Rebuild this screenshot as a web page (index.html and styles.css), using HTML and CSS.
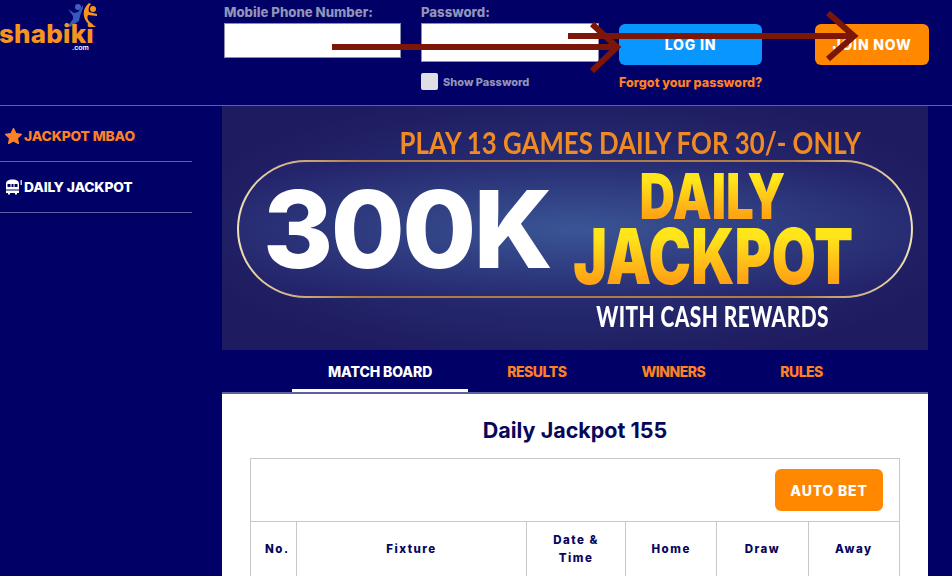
FILE: index.html
```html
<!DOCTYPE html>
<html lang="en">
<head>
    <meta charset="UTF-8">
    <meta name="viewport" content="width=device-width, initial-scale=1.0">
    <title>Shabiki - Daily Jackpot</title>
    <link rel="stylesheet" href="styles.css">
</head>
<body>
    <header class="header">
        <a class="logo" href="#">
            <svg class="logo-figures" width="34" height="26" viewBox="0 0 34 26">
                <circle cx="13" cy="5" r="3" fill="#3f5fc4"/>
                <path d="M3 7 L9 11 L13 10 L16 6 L18 3 L18 6 L15 14 L14 19 L5 25 L3 24 L8 17 L8 14 Z" fill="#3558bd"/>
                <circle cx="28" cy="7" r="3" fill="#f7941d"/>
                <path d="M24 1 C17 7 16 17 27 25 L31 25 C24 20 21 17 23 13 L32 14 L32 12 L24 10 C23 7 24 4 26 2 Z" fill="#f7941d"/>
            </svg>
            <span class="logo-name">shabiki</span>
            <span class="logo-com">.com</span>
        </a>

        <form class="login-form">
            <div class="field field-phone">
                <label>Mobile Phone Number:</label>
                <input type="text" class="text-input">
            </div>
            <div class="field field-password">
                <label>Password:</label>
                <input type="text" class="text-input tall">
                <div class="show-password">
                    <span class="checkbox"></span>
                    <span>Show Password</span>
                </div>
            </div>
            <div class="login-actions">
                <button type="button" class="btn btn-blue">LOG IN</button>
                <a class="forgot" href="#">Forgot your password?</a>
            </div>
            <button type="button" class="btn btn-orange join">JOIN NOW</button>
        </form>
    </header>

    <div class="page">
        <nav class="sidebar">
            <a class="side-link orange" href="#">
                <svg width="17" height="16" viewBox="0 0 24 23"><path d="M12 0.5 L15.6 7.8 L23.6 9 L17.8 14.6 L19.2 22.6 L12 18.8 L4.8 22.6 L6.2 14.6 L0.4 9 L8.4 7.8 Z" fill="#ff8124" stroke="#ff8124" stroke-width="1.5" stroke-linejoin="round"/></svg>
                JACKPOT MBAO
            </a>
            <a class="side-link" href="#">
                <svg width="17" height="16" viewBox="0 0 17 16"><path d="M1 5 C1 2 3 0.5 7.5 0.5 C12 0.5 14 2 14 5 L14 14 L12 14 L12 15.5 L10 15.5 L10 14 L5 14 L5 15.5 L3 15.5 L3 14 L1 14 Z" fill="#fff"/><rect x="2.5" y="5" width="10" height="3" fill="#000066"/><rect x="5.5" y="5" width="1" height="3" fill="#fff"/><rect x="8.5" y="5" width="1" height="3" fill="#fff"/><rect x="1" y="10.5" width="13" height="1" fill="#000066"/><rect x="15.6" y="1" width="1.2" height="5" fill="#fff"/></svg>
                DAILY JACKPOT
            </a>
        </nav>

        <main class="content">
            <section class="banner">
                <p class="banner-top"><span>PLAY 13 GAMES DAILY FOR 30/- ONLY</span></p>
                <div class="pill">
                    <span class="amount">300K</span>
                    <div class="pill-title">
                        <span class="daily">DAILY</span>
                        <span class="jackpot">JACKPOT</span>
                    </div>
                </div>
                <p class="banner-bottom"><span>WITH CASH REWARDS</span></p>
            </section>

            <div class="tabs">
                <a class="tab active" href="#">MATCH BOARD</a>
                <a class="tab" href="#">RESULTS</a>
                <a class="tab" href="#">WINNERS</a>
                <a class="tab" href="#">RULES</a>
            </div>

            <section class="board">
                <h2>Daily Jackpot 155</h2>
                <table class="match-table">
                    <colgroup>
                        <col class="col-no">
                        <col class="col-fixture">
                        <col class="col-date">
                        <col class="col-odd">
                        <col class="col-odd">
                        <col class="col-odd">
                    </colgroup>
                    <tr>
                        <td colspan="6" class="auto-cell"><button type="button" class="btn btn-orange auto">AUTO BET</button></td>
                    </tr>
                    <tr>
                        <th>No.</th>
                        <th>Fixture</th>
                        <th>Date &amp; Time</th>
                        <th>Home</th>
                        <th>Draw</th>
                        <th>Away</th>
                    </tr>
                </table>
            </section>
        </main>
    </div>

    <!-- arrows drawn over the page -->
    <svg class="arrows" width="952" height="105" viewBox="0 0 952 105">
        <g fill="none" stroke="#7b1608" stroke-width="6">
            <path d="M332 47 H615"/>
            <path d="M592 24 L617 47 L592 71"/>
            <path d="M568 36 H852"/>
            <path d="M828 13 L854 36 L828 59"/>
        </g>
    </svg>
</body>
</html>
```

FILE: styles.css
```css
* {
    margin: 0;
    padding: 0;
    box-sizing: border-box;
    font-family: 'Inter', 'Open Sans', sans-serif;
}

html, body {
    height: 576px;
    overflow: hidden;
}

body {
    position: relative;
    background: #000066;
    color: #fff;
}

a {
    text-decoration: none;
}

.header {
    display: flex;
    height: 106px;
    border-bottom: 1px solid #5d61a3;
}

.logo {
    position: relative;
    width: 224px;
    height: 60px;
    flex-shrink: 0;
}

.logo-figures {
    position: absolute;
    left: 65px;
    top: 2px;
}

.logo-name {
    position: absolute;
    left: -1px;
    top: 24px;
    font-size: 26px;
    line-height: 20px;
    font-weight: 800;
    letter-spacing: 0.2px;
    color: #f7941d;
}

.logo-com {
    position: absolute;
    left: 72px;
    top: 44px;
    font-size: 7px;
    line-height: 7px;
    font-weight: 600;
    color: #fff;
}

.login-form {
    display: flex;
    align-items: flex-start;
    padding-top: 4px;
}

.field label {
    display: block;
    height: 19px;
    font-size: 13.2px;
    line-height: 16px;
    font-weight: 800;
    color: #9094b6;
}

.field-phone {
    width: 177px;
    margin-right: 20px;
}

.field-password {
    width: 178px;
    margin-right: 20px;
}

.text-input {
    display: block;
    width: 100%;
    height: 35px;
    background: #fff;
    border: 1px solid #8a8db0;
}

.text-input.tall {
    height: 39px;
}

.show-password {
    display: flex;
    align-items: center;
    gap: 5px;
    margin-top: 11px;
    font-size: 11px;
    font-weight: 800;
    color: #9094b6;
}

.checkbox {
    width: 17px;
    height: 17px;
    background: #dfdfe3;
    border-radius: 2px;
}

.btn {
    border: none;
    border-radius: 6px;
    color: #fff;
    font-size: 14px;
    font-weight: 800;
    letter-spacing: 0.8px;
}

.login-actions {
    display: flex;
    flex-direction: column;
    width: 143px;
    margin-top: 20px;
    margin-right: 53px;
}

.btn-blue {
    height: 41px;
    background: #0a96ff;
}

.btn-orange {
    background: #ff8800;
}

.forgot {
    margin-top: 10px;
    font-size: 12.6px;
    line-height: 16px;
    font-weight: 800;
    white-space: nowrap;
    color: #ff8124;
}

.join {
    width: 114px;
    height: 41px;
    margin-top: 20px;
}

.page {
    display: grid;
    grid-template-columns: 222px 706px;
}

.sidebar {
    width: 192px;
    padding-top: 5px;
}

.side-link {
    display: flex;
    align-items: center;
    gap: 2px;
    height: 51px;
    padding-left: 5px;
    border-bottom: 1px solid #5d61a3;
    font-size: 13.8px;
    font-weight: 800;
    letter-spacing: -0.15px;
    color: #fff;
}

.side-link.orange {
    color: #ff8124;
}

.banner {
    height: 244px;
    padding: 19px 15px 0;
    overflow: hidden;
    background: radial-gradient(ellipse at 50% 50%, #2c3a80 0%, #1f1b60 80%);
}

.banner-top,
.banner-bottom {
    text-align: center;
    white-space: nowrap;
}

.banner-top span,
.banner-bottom span {
    display: inline-block;
    font-family: 'Lato', sans-serif;
}

.banner-top {
    height: 35px;
    padding-left: 110px;
    line-height: 35px;
    color: #f08a24;
}

.banner-top span {
    font-size: 30px;
    font-weight: 700;
    transform: scaleX(0.86);
}

.pill {
    display: flex;
    align-items: center;
    width: 676px;
    height: 138px;
    border: 2px solid transparent;
    border-radius: 69px;
    background:
        radial-gradient(ellipse at 50% 50%, #3a5595 0%, #24246c 85%) padding-box,
        linear-gradient(90deg, #f0e2b4 0%, #b07c44 18%, #b07c44 82%, #f0e2b4 100%) border-box;
}

.amount {
    width: 339px;
    padding-left: 24px;
    font-size: 107px;
    line-height: 108px;
    font-weight: 800;
    letter-spacing: -2.5px;
    color: #fff;
}

.pill-title {
    display: flex;
    flex-direction: column;
    align-items: center;
    width: 270px;
}

.daily,
.jackpot {
    display: block;
    font-weight: 900;
    white-space: nowrap;
    color: transparent;
    background: linear-gradient(180deg, #ffe61a 20%, #ffa515 85%);
    -webkit-background-clip: text;
    background-clip: text;
}

.daily {
    font-size: 63px;
    line-height: 54px;
    transform: scaleX(0.78);
}

.jackpot {
    font-size: 77px;
    line-height: 66px;
    transform: scaleX(0.74);
}

.banner-bottom {
    padding-left: 276px;
    margin-top: 2px;
    line-height: 32px;
    color: #fff;
}

.banner-bottom span {
    font-size: 29px;
    font-weight: 900;
    letter-spacing: 0.6px;
    transform: scaleX(0.72);
}

.tabs {
    display: flex;
    gap: 3px;
    height: 44px;
    padding-left: 70px;
    border-bottom: 2px solid #5f62a0;
}

.tab {
    height: 42px;
    padding: 0 36px;
    font-size: 14px;
    line-height: 44px;
    font-weight: 800;
    letter-spacing: -0.5px;
    color: #ff8124;
}

.tab.active {
    border-bottom: 3px solid #fff;
    letter-spacing: -0.1px;
    color: #fff;
}

.board {
    height: 200px;
    padding: 21px 28px 0;
    background: #fff;
}

.board h2 {
    height: 43px;
    text-align: center;
    font-size: 21.5px;
    line-height: 30px;
    font-weight: 700;
    color: #07075a;
}

.match-table {
    width: 649px;
    table-layout: fixed;
    border-collapse: collapse;
}

.match-table td,
.match-table th {
    border: 1px solid #c8c8c8;
}

.auto-cell {
    height: 63px;
    padding-right: 16px;
    text-align: right;
}

.auto {
    width: 108px;
    height: 42px;
}

.match-table th {
    height: 55px;
    padding: 0 14px;
    font-size: 11.5px;
    line-height: 18px;
    font-weight: 800;
    letter-spacing: 1.5px;
    color: #07075a;
}

.col-no { width: 46px; }
.col-fixture { width: 230px; }
.col-date { width: 99px; }
.col-odd { width: 91.33px; }

.arrows {
    position: absolute;
    left: 0;
    top: 0;
    pointer-events: none;
}
```
